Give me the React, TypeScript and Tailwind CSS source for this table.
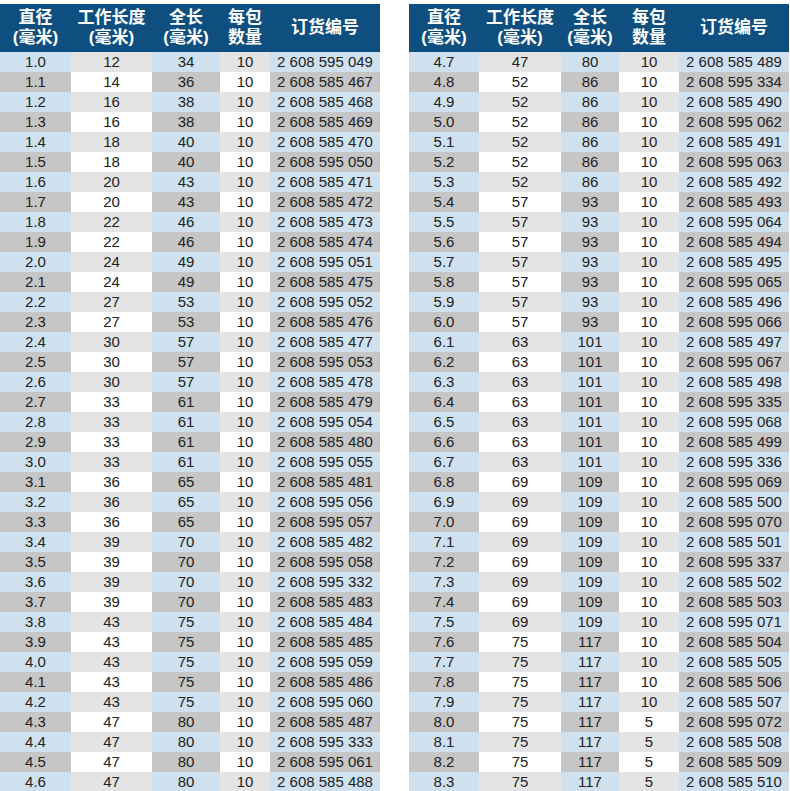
const left = [
  "1.0 12 34 10 2 608 595 049",
  "1.1 14 36 10 2 608 585 467",
  "1.2 16 38 10 2 608 585 468",
  "1.3 16 38 10 2 608 585 469",
  "1.4 18 40 10 2 608 585 470",
  "1.5 18 40 10 2 608 595 050",
  "1.6 20 43 10 2 608 585 471",
  "1.7 20 43 10 2 608 585 472",
  "1.8 22 46 10 2 608 585 473",
  "1.9 22 46 10 2 608 585 474",
  "2.0 24 49 10 2 608 595 051",
  "2.1 24 49 10 2 608 585 475",
  "2.2 27 53 10 2 608 595 052",
  "2.3 27 53 10 2 608 585 476",
  "2.4 30 57 10 2 608 585 477",
  "2.5 30 57 10 2 608 595 053",
  "2.6 30 57 10 2 608 585 478",
  "2.7 33 61 10 2 608 585 479",
  "2.8 33 61 10 2 608 595 054",
  "2.9 33 61 10 2 608 585 480",
  "3.0 33 61 10 2 608 595 055",
  "3.1 36 65 10 2 608 585 481",
  "3.2 36 65 10 2 608 595 056",
  "3.3 36 65 10 2 608 595 057",
  "3.4 39 70 10 2 608 585 482",
  "3.5 39 70 10 2 608 595 058",
  "3.6 39 70 10 2 608 595 332",
  "3.7 39 70 10 2 608 585 483",
  "3.8 43 75 10 2 608 585 484",
  "3.9 43 75 10 2 608 585 485",
  "4.0 43 75 10 2 608 595 059",
  "4.1 43 75 10 2 608 585 486",
  "4.2 43 75 10 2 608 595 060",
  "4.3 47 80 10 2 608 585 487",
  "4.4 47 80 10 2 608 595 333",
  "4.5 47 80 10 2 608 595 061",
  "4.6 47 80 10 2 608 585 488",
];

const right = [
  "4.7 47 80 10 2 608 585 489",
  "4.8 52 86 10 2 608 595 334",
  "4.9 52 86 10 2 608 585 490",
  "5.0 52 86 10 2 608 595 062",
  "5.1 52 86 10 2 608 585 491",
  "5.2 52 86 10 2 608 595 063",
  "5.3 52 86 10 2 608 585 492",
  "5.4 57 93 10 2 608 585 493",
  "5.5 57 93 10 2 608 595 064",
  "5.6 57 93 10 2 608 585 494",
  "5.7 57 93 10 2 608 585 495",
  "5.8 57 93 10 2 608 595 065",
  "5.9 57 93 10 2 608 585 496",
  "6.0 57 93 10 2 608 595 066",
  "6.1 63 101 10 2 608 585 497",
  "6.2 63 101 10 2 608 595 067",
  "6.3 63 101 10 2 608 585 498",
  "6.4 63 101 10 2 608 595 335",
  "6.5 63 101 10 2 608 595 068",
  "6.6 63 101 10 2 608 585 499",
  "6.7 63 101 10 2 608 595 336",
  "6.8 69 109 10 2 608 595 069",
  "6.9 69 109 10 2 608 585 500",
  "7.0 69 109 10 2 608 595 070",
  "7.1 69 109 10 2 608 585 501",
  "7.2 69 109 10 2 608 595 337",
  "7.3 69 109 10 2 608 585 502",
  "7.4 69 109 10 2 608 585 503",
  "7.5 69 109 10 2 608 595 071",
  "7.6 75 117 10 2 608 585 504",
  "7.7 75 117 10 2 608 585 505",
  "7.8 75 117 10 2 608 585 506",
  "7.9 75 117 10 2 608 585 507",
  "8.0 75 117 5 2 608 595 072",
  "8.1 75 117 5 2 608 585 508",
  "8.2 75 117 5 2 608 585 509",
  "8.3 75 117 5 2 608 585 510",
];

// blue / light gray on odd rows, gray / white on even rows
const odd = ["bg-[#cfe1ef]", "bg-[#e4e4e4]"];
const even = ["bg-[#c6c6c6]", "bg-white"];

const Table = ({ rows, widths }: { rows: string[]; widths: string[] }) => {
  const heads = [
    ["直径", "(毫米)"],
    ["工作长度", "(毫米)"],
    ["全长", "(毫米)"],
    ["每包", "数量"],
    ["订货编号"],
  ];
  return (
    <div className="w-[380px] flex flex-col">
      {/* Header */}
      <div className="flex h-12 bg-[#0f4f80] text-white font-bold text-[17px] leading-[20px] font-['Liberation_Sans','Noto_Sans_CJK_SC',sans-serif]">
        {heads.map((h, i) => (
          <div key={i} className={`${widths[i]} flex flex-col items-center justify-center whitespace-nowrap`}>
            {h.map((t) => (
              <span key={t}>{t}</span>
            ))}
          </div>
        ))}
      </div>

      {/* Rows */}
      {rows.map((r, ri) => {
        const p = r.split(" ");
        const cells = [p[0], p[1], p[2], p[3], p.slice(4).join(" ")];
        const pal = ri % 2 === 0 ? odd : even;
        return (
          <div key={ri} className="flex h-5 text-[15px] leading-5 text-[#222] font-['Liberation_Sans',Arial,sans-serif]">
            {cells.map((c, ci) => (
              <div key={ci} className={`${widths[ci]} ${pal[ci % 2]} text-center`}>
                {c}
              </div>
            ))}
          </div>
        );
      })}
    </div>
  );
};

export default function App() {
  return (
    <div className="w-[790px] h-[791px] overflow-hidden bg-white">
      <div className="flex pt-1 gap-[29px]">
        <Table rows={left} widths={["w-[71px]", "w-[81px]", "w-[68px]", "w-[50px]", "w-[110px]"]} />
        <Table rows={right} widths={["w-[70px]", "w-[82px]", "w-[58px]", "w-[60px]", "w-[110px]"]} />
      </div>
    </div>
  );
}
